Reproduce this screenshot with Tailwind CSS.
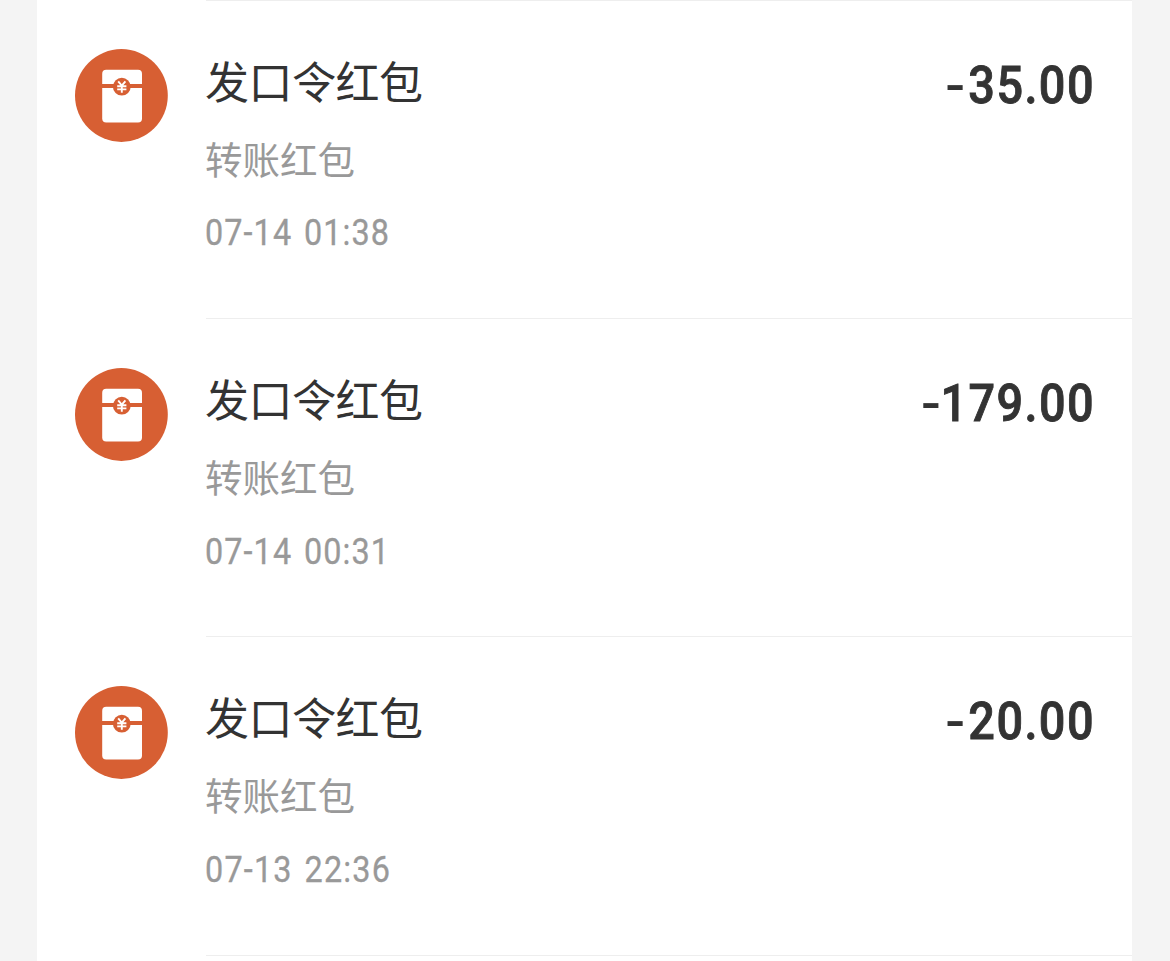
<!DOCTYPE html>
<html lang="zh-CN">
<head>
  <meta charset="UTF-8" />
  <meta name="viewport" content="width=device-width, initial-scale=1" />
  <title>账单</title>
  <script src="https://cdn.jsdelivr.net/npm/@tailwindcss/browser@4"></script>
</head>
<body class="bg-[#f4f4f4] font-['Roboto','Noto_Sans_CJK_SC',sans-serif] h-[961px] overflow-hidden">

  <!-- Shared icon -->
  <svg class="hidden">
    <symbol id="packet" viewBox="0 0 94 94">
      <circle cx="46.4" cy="46.5" r="46.4" fill="#d75f33" />
      <rect x="27.2" y="20.8" width="39.8" height="52.6" rx="4" fill="#fff" />
      <path d="M27 37.1h40.2" stroke="#d75f33" stroke-width="4" />
      <circle cx="46.8" cy="37.7" r="8.9" fill="#d75f33" />
      <path d="M43.2 32.3l3.6 4.3 3.6-4.3M46.8 36.6v7.2M42.2 37.2h9.2M42.2 40.4h9.2" fill="none" stroke="#fff" stroke-width="1.9" />
    </symbol>
  </svg>

  <!-- Bill list -->
  <main class="bg-white ml-[37px] mr-[38px] h-full">
    <div class="flex h-[318px] pl-[38px]">
      <svg class="w-[94px] h-[94px] mt-[49px] shrink-0"><use href="#packet" /></svg>
      <div class="flex flex-1 justify-between ml-[37px] pr-[38px] border-t border-[#eeeeee]">
        <div class="-ml-px">
          <h2 class="mt-[50px] text-[44px] leading-[66px] tracking-[-0.5px] text-[#333333]">发口令红包</h2>
          <p class="mt-[16px] text-[37.5px] leading-[56px] text-[#999999]">转账红包</p>
          <p class="mt-[20px] text-[36px] leading-[48px] tracking-[1.2px] [word-spacing:3px] scale-x-90 origin-left whitespace-nowrap text-[#999999] [-webkit-text-stroke:0.3px]">07-14 01:38</p>
        </div>
        <div class="flex mt-[53px] -mr-px h-[64px] text-[52px] leading-[64px] font-medium tracking-[1.6px] scale-x-90 origin-right text-[#333333] [-webkit-text-stroke:0.9px]"><span class="mr-[4px] scale-x-125 [-webkit-text-stroke:0px]">-</span><span>35.00</span></div>
      </div>
    </div>
    <div class="flex h-[318px] pl-[38px]">
      <svg class="w-[94px] h-[94px] mt-[49.5px] shrink-0"><use href="#packet" /></svg>
      <div class="flex flex-1 justify-between ml-[37px] pr-[38px] border-t border-[#eeeeee]">
        <div class="-ml-px">
          <h2 class="mt-[50px] text-[44px] leading-[66px] tracking-[-0.5px] text-[#333333]">发口令红包</h2>
          <p class="mt-[16px] text-[37.5px] leading-[56px] text-[#999999]">转账红包</p>
          <p class="mt-[21px] text-[36px] leading-[48px] tracking-[1.2px] [word-spacing:3px] scale-x-90 origin-left whitespace-nowrap text-[#999999] [-webkit-text-stroke:0.3px]">07-14 00:31</p>
        </div>
        <div class="flex mt-[53px] -mr-px h-[64px] text-[52px] leading-[64px] font-medium tracking-[1.6px] scale-x-90 origin-right text-[#333333] [-webkit-text-stroke:0.9px]"><span class="scale-x-125 [-webkit-text-stroke:0px]">-</span><span>179.00</span></div>
      </div>
    </div>
    <div class="flex h-[319px] pl-[38px]">
      <svg class="w-[94px] h-[94px] mt-[49.5px] shrink-0"><use href="#packet" /></svg>
      <div class="flex flex-1 justify-between ml-[37px] pr-[38px] border-t border-[#eeeeee]">
        <div class="-ml-px">
          <h2 class="mt-[50px] text-[44px] leading-[66px] tracking-[-0.5px] text-[#333333]">发口令红包</h2>
          <p class="mt-[16px] text-[37.5px] leading-[56px] text-[#999999]">转账红包</p>
          <p class="mt-[21px] text-[36px] leading-[48px] tracking-[1.3px] [word-spacing:3px] scale-x-90 origin-left whitespace-nowrap text-[#999999] [-webkit-text-stroke:0.3px]">07-13 22:36</p>
        </div>
        <div class="flex mt-[53px] -mr-px h-[64px] text-[52px] leading-[64px] font-medium tracking-[1.6px] scale-x-90 origin-right text-[#333333] [-webkit-text-stroke:0.9px]"><span class="mr-[4px] scale-x-125 [-webkit-text-stroke:0px]">-</span><span>20.00</span></div>
      </div>
    </div>
    <div class="ml-[169px] border-t border-[#eeeeee]"></div>
  </main>

</body>
</html>
